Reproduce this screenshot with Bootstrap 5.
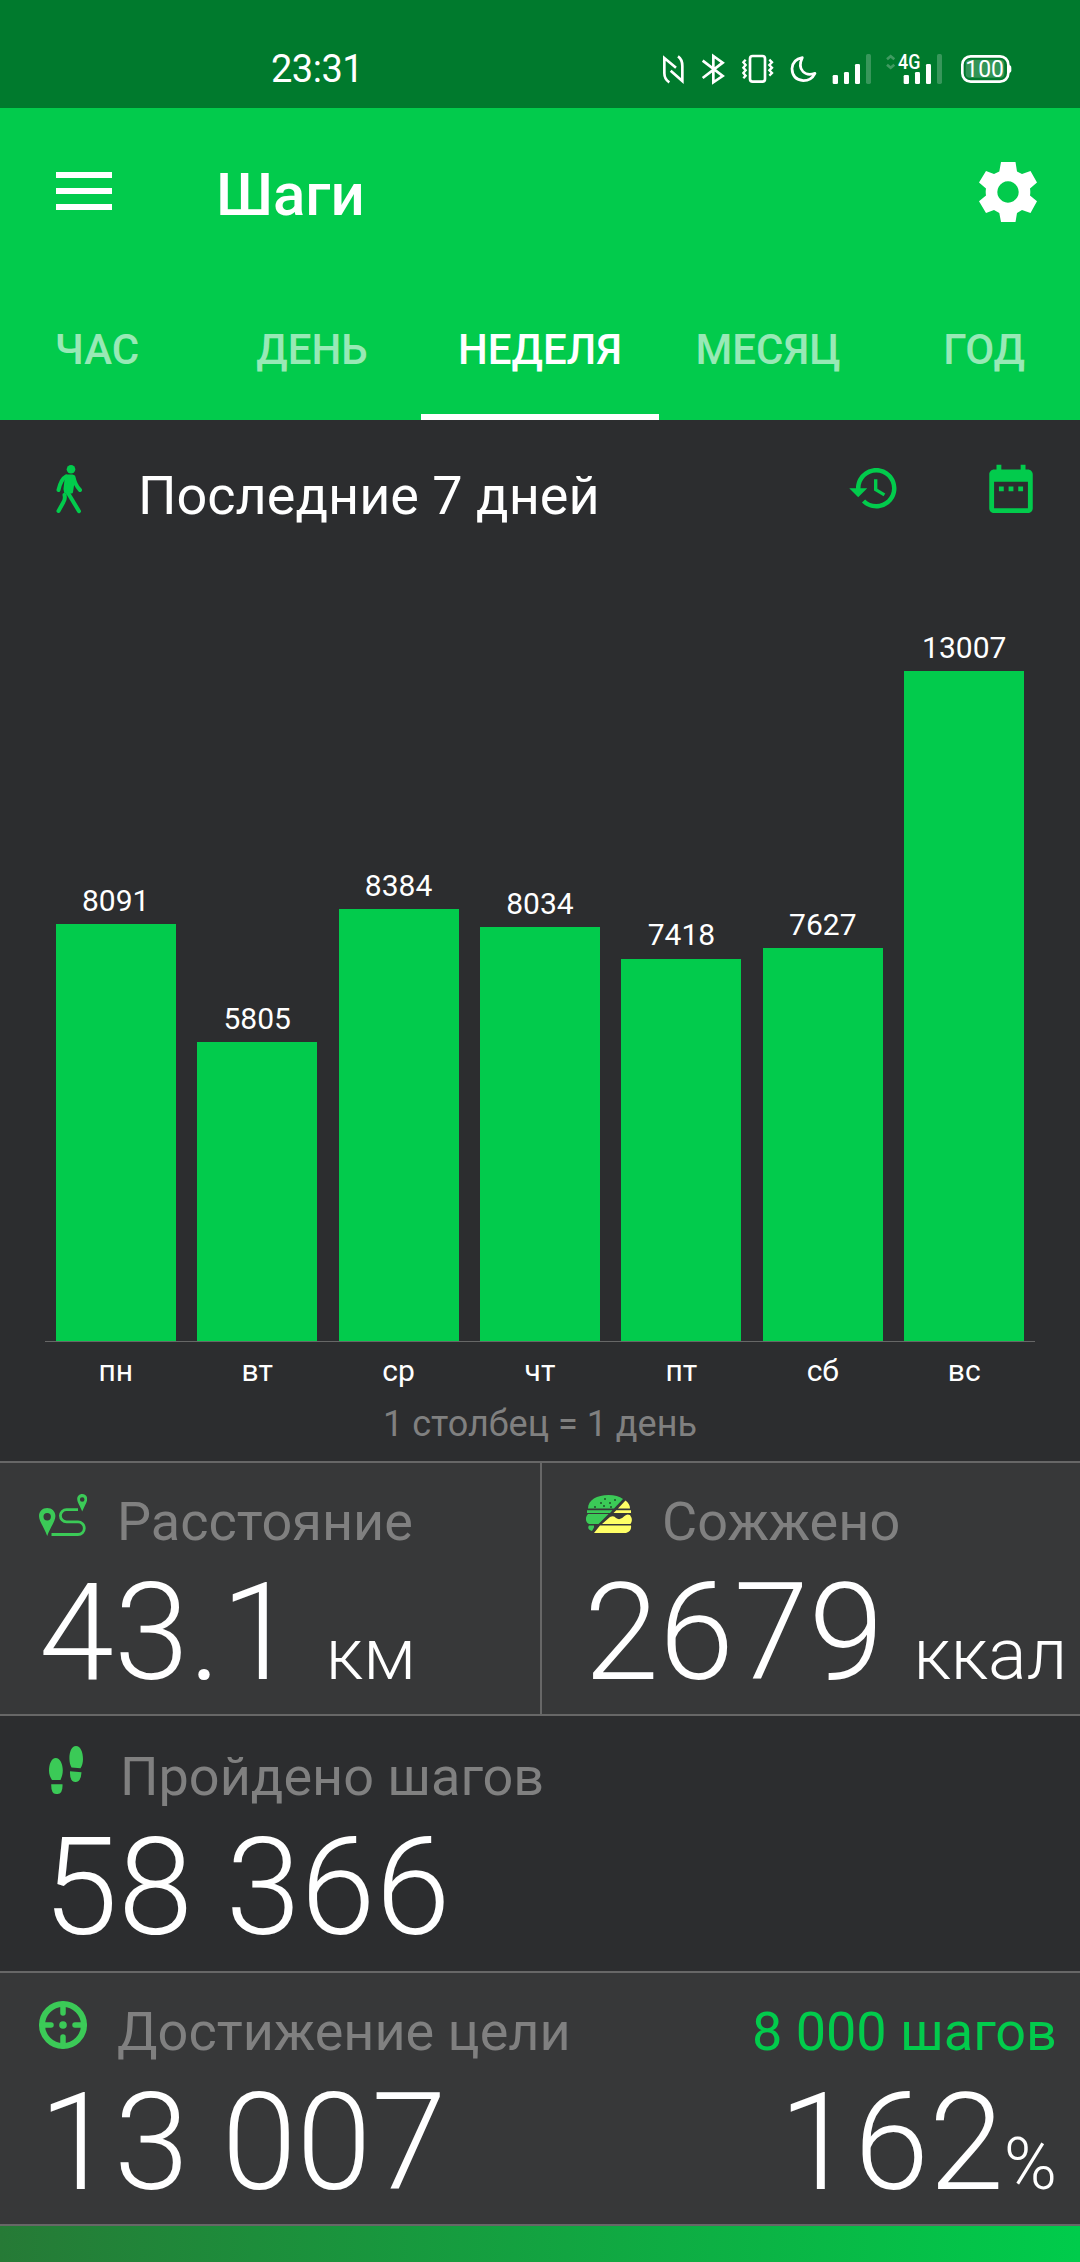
<!DOCTYPE html>
<html lang="ru" data-bs-theme="dark">
<head>
<meta charset="utf-8">
<meta name="viewport" content="width=device-width, initial-scale=1">
<title>Шаги</title>
<link href="https://cdn.jsdelivr.net/npm/bootstrap@5.3.0/dist/css/bootstrap.min.css" rel="stylesheet">
<style>
  :root { --accent: #02cb4c; --leaf: #3bca57; --panel: #2c2d2f; --panel-alt: #373839; --rule: #676767; --muted: #808080; }
  html { overflow-x: hidden; }
  body { width: 1080px; height: 2262px; overflow: hidden; background: var(--panel); color: #fff; font-family: Roboto, sans-serif; }
  svg { display: block; flex: none; }
  .status-strip { height: 108px; background: #007a2d; padding: 50px 66px 0 271px; }
  .clock { font-size: 38px; line-height: 38px; letter-spacing: -.5px; }
  .app-top { height: 312px; background: var(--accent); }
  .title-row { height: 202px; padding: 48px 36px 0 56px; }
  .menu-lines { margin-top: 16px; }
  .app-title { font-size: 60px; line-height: 72px; font-weight: 500; margin: 3px 0 0 104px; }
  .tab-strip { height: 110px; }
  .tab-strip .nav-link { font-size: 42px; line-height: 50px; font-weight: 500; padding: 15px 0 0; color: rgba(255,255,255,.6); text-align: center; border-radius: 0; }
  .tab-strip .nav-link.active { color: #fff; box-shadow: inset 0 -6px #fff; }
  .t-hour { width: 194px; } .t-day { width: 236px; margin-right: -9px; } .t-week { width: 238px; }
  .t-month { width: 218px; } .t-year { width: 214px; margin-right: -11px; }
  .chart-panel { height: 1041px; padding-top: 44px; }
  .range-row { height: 64px; padding: 0 40px 0 56px; }
  .range-title { font-size: 54px; line-height: 64px; font-weight: 400; margin-left: 55px; }
  .calendar-icon { margin-left: 81px; }
  .chart-box { margin: 0 45px; }
  .plot { height: 813px; }
  .slot { flex: 1 0 0; }
  .bar-value { font-size: 30px; line-height: 36px; margin-bottom: 5.5px; }
  .bar-fill { width: 120px; height: calc(var(--steps) * .05151px); background: var(--accent); }
  .axis { border-top: 1px solid var(--rule); padding-top: 9px; font-size: 30px; line-height: 40px; }
  .caption-line { font-size: 36px; line-height: 44px; margin-top: 11px; color: var(--muted); }
  .stat { border-top: 2px solid var(--rule); padding: 27px 23px 0 39px; height: 253px; white-space: nowrap; }
  .stat-alt { background: var(--panel-alt); }
  .stat-label { font-size: 54px; line-height: 64px; color: var(--muted); }
  .stat-big { font-size: 135px; line-height: 136px; font-weight: 300; margin-top: 11px; }
  .unit { font-size: 72px; line-height: 1; margin-left: -3px; }
  .unit.pct { margin-left: 0; }
  .dist { width: 540px; }
  .dist-label, .goal-label { margin-left: 30px; }
  .burn { width: 540px; border-left: 2px solid var(--rule); padding-left: 44px; padding-right: 0; }
  .burn-label { margin-left: 30px; }
  .kcal { margin-left: -2px; }
  .walked { height: 257px; padding-top: 29px; padding-left: 49px; }
  .walked svg { margin-top: -1px; }
  .walked-label { margin-left: 37px; }
  .steps { margin-left: -6px; }
  .goal-target { color: var(--accent); }
  .goal-bar { height: 38px; border-top: 2px solid var(--rule); background: linear-gradient(90deg, #267a36, #00cc4b) padding-box; }
</style>
</head>
<body>
<header>
  <div class="status-strip d-flex justify-content-between align-items-start">
    <span class="clock">23:31</span>
    <!-- status glyphs -->
    <svg width="354" height="36.8" viewBox="120 60 1062 110.4" fill="none" stroke="#fff" stroke-width="8">
      <path d="M148 157Q133 148 133 130V84L168 113M174 79Q187 88 187 108V153L152 122"/>
      <path d="M248 92L308 138L280 157V78L308 98L248 144"/>
      <rect x="390" y="78" width="45" height="77" rx="8"/>
      <path d="M377 89l-7 8 7 8-7 8 7 8-7 8 7 8-7 8M448 89l8 8-8 8 8 8-8 8 8 8-8 8" stroke-width="7"/>
      <path d="M547 83Q534 110 549 125Q562 138 585 130Q574 152 550 152Q517 149 516 116Q518 88 547 83Z" stroke-linejoin="round"/>
      <g fill="#fff" stroke="none">
        <rect x="638" y="135" width="16" height="27" rx="4"/><rect x="672" y="126" width="15" height="36" rx="4"/><rect x="705" y="102" width="15" height="60" rx="4"/><rect x="738" y="72" width="15" height="90" rx="5" opacity=".22"/>
        <rect x="851" y="135" width="16" height="27" rx="4"/><rect x="885" y="126" width="15" height="36" rx="4"/><rect x="918" y="102" width="15" height="60" rx="4"/><rect x="951" y="72" width="15" height="90" rx="5" opacity=".22"/>
        <rect x="1037" y="89" width="116" height="54" rx="12" opacity=".2"/>
        <path d="M1166 105q8 0 8 8v8q0 8-8 8z"/>
      </g>
      <path d="M801 88l11-9 11 9M801 104l11 9 11-9" opacity=".25"/>
      <rect x="1027" y="79" width="138" height="76" rx="25"/>
      <g fill="#fff" stroke="none" font-family="Roboto, sans-serif">
        <text x="834" y="116" font-size="61" font-weight="500" textLength="67" lengthAdjust="spacingAndGlyphs">4G</text>
        <text x="1036" y="141" font-size="70" textLength="116" lengthAdjust="spacingAndGlyphs">100</text>
      </g>
    </svg>
  </div>
  <div class="app-top">
    <div class="title-row d-flex align-items-start">
      <svg class="menu-lines" width="56" height="38" viewBox="0 0 56 38" fill="#fff"><path d="M0 0h56v6H0zM0 16h56v6H0zM0 32h56v6H0z"/></svg>
      <h1 class="app-title">Шаги</h1>
      <svg class="ms-auto" width="72" height="72" viewBox="-36 -36 72 72" fill="#fff"><path fill-rule="evenodd" d="M-7-30H7.5L9-20.5 14-18 22.5-21 29-9.5 22-3.5Q22.6 0 22 3.5L29 9.3 22.5 21 14 18 9 21 7.5 30H-7L-8.7 21-14 18-22 21-29 9.3-22 3.5Q-22.6 0-22-3.5L-29-9.5-22-21-14-18-8.7-20.5ZM0-10.7a10.7 10.7 0 1 0 .01 0Z"/></svg>
    </div>
    <nav class="nav flex-nowrap tab-strip">
      <a class="nav-link t-hour">ЧАС</a>
      <a class="nav-link t-day">ДЕНЬ</a>
      <a class="nav-link t-week active">НЕДЕЛЯ</a>
      <a class="nav-link t-month">МЕСЯЦ</a>
      <a class="nav-link t-year">ГОД</a>
    </nav>
  </div>
</header>
<main>
  <section class="chart-panel">
    <div class="range-row d-flex align-items-start">
      <!-- walker -->
      <svg width="27" height="50" viewBox="0 0 27 50" fill="#02cb4c" stroke="#02cb4c" stroke-linecap="round" stroke-linejoin="round">
        <circle cx="15" cy="5.3" r="4.3" stroke="none"/>
        <path d="M10.5 12h6l1 3-2 13h-6l-.5-3 1-9z" stroke-width="3"/>
        <path d="M10 12.5Q5 15 2.500 26M17.500 13Q19 21 24 26M8.500 31Q9.500 35 7.500 38L2.500 47M12 29L23 47.200" stroke-width="4" fill="none"/>
      </svg>
      <h2 class="range-title mb-0">Последние 7 дней</h2>
      <svg class="ms-auto" width="54" height="54" viewBox="0 1.2 24 24" fill="#02cb4c"><path d="M13 3c-4.97 0-9 4.03-9 9H1l3.89 3.89.07.14L9 12H6c0-3.87 3.13-7 7-7s7 3.13 7 7-3.13 7-7 7c-1.93 0-3.68-.79-4.94-2.06l-1.42 1.42C8.27 19.99 10.51 21 13 21c4.97 0 9-4.03 9-9s-4.03-9-9-9zm-1 5v5l4.28 2.54.72-1.21-3.5-2.08V8H12z"/></svg>
      <svg class="calendar-icon" width="58" height="58" viewBox="0 1.7 24 24" fill="#02cb4c"><path d="M9 11H7v2h2v-2zm4 0h-2v2h2v-2zm4 0h-2v2h2v-2zm2-7h-1V2h-2v2H8V2H6v2H5c-1.11 0-1.99.9-1.99 2L3 20c0 1.1.89 2 2 2h14c1.1 0 2-.9 2-2V6c0-1.1-.9-2-2-2zm0 16H5V9h14v11z"/></svg>
    </div>
    <div class="chart-box">
      <div class="plot d-flex align-items-end">
        <div class="slot d-flex flex-column align-items-center"><span class="bar-value">8091</span><div class="bar-fill" style="--steps:8091"></div></div>
        <div class="slot d-flex flex-column align-items-center"><span class="bar-value">5805</span><div class="bar-fill" style="--steps:5805"></div></div>
        <div class="slot d-flex flex-column align-items-center"><span class="bar-value">8384</span><div class="bar-fill" style="--steps:8384"></div></div>
        <div class="slot d-flex flex-column align-items-center"><span class="bar-value">8034</span><div class="bar-fill" style="--steps:8034"></div></div>
        <div class="slot d-flex flex-column align-items-center"><span class="bar-value">7418</span><div class="bar-fill" style="--steps:7418"></div></div>
        <div class="slot d-flex flex-column align-items-center"><span class="bar-value">7627</span><div class="bar-fill" style="--steps:7627"></div></div>
        <div class="slot d-flex flex-column align-items-center"><span class="bar-value">13007</span><div class="bar-fill" style="--steps:13007"></div></div>
      </div>
      <div class="axis d-flex text-center">
        <span class="slot">пн</span><span class="slot">вт</span><span class="slot">ср</span><span class="slot">чт</span><span class="slot">пт</span><span class="slot">сб</span><span class="slot">вс</span>
      </div>
    </div>
    <div class="caption-line text-center">1 столбец = 1 день</div>
  </section>

  <div class="d-flex">
    <section class="stat stat-alt dist">
      <div class="d-flex align-items-start">
        <svg width="48" height="50" viewBox="0 0 48 50" fill="#3bca57">
          <path fill-rule="evenodd" d="M8.200 18C3.500 18 0 21.500 0 26c0 5.500 5 11 8.200 20C11.400 37 16.400 31.500 16.400 26c0-4.500-3.500-8-8.200-8zm0 5a3.700 3.700 0 1 1 0 7.400 3.700 3.700 0 0 1 0-7.400zM43.200 4c-3 0-5 2.200-5 5 0 3.500 3 7 5 12.500 2-5.500 5-9 5-12.500 0-2.800-2-5-5-5zm0 3.200a2.300 2.300 0 1 1 0 4.600 2.300 2.300 0 0 1 0-4.600z"/>
          <path d="M39 19.700H27.500a6 6 0 0 0 0 12.200H39a6.300 6.300 0 0 1 0 12.600H12.500" fill="none" stroke="#3bca57" stroke-width="2.800"/>
        </svg>
        <span class="stat-label dist-label">Расстояние</span>
      </div>
      <div class="stat-big">43.1 <span class="unit">км</span></div>
    </section>
    <section class="stat stat-alt burn">
      <div class="d-flex align-items-start">
        <svg width="46" height="50" viewBox="0 0 46 50">
          <path fill="#3bca57" d="M2 18.500C2 10 11 5 22.500 5 28.500 5 33.500 6.500 37 9L28 18.500zM1 20.200H26.500L24 23H1zM2 24H22.500L12.500 34H3C-1 32-1 27 2 24zM3 35.500H8V37.500L6 41C2 40 1.500 37.500 3 35.500z"/>
          <path fill="#ffff66" d="M39.500 10.500C42.500 12.500 44 15.500 44 18.500H32zM30.300 20.200H45V23H27.500zM24 27Q28 25 30 28Q34 31 38.500 26Q41 23.500 44 25Q47.500 30 44.500 34H16zM14 35.500H45Q46 41 40 43H8z"/>
          <path d="M8 17h2M14 13h2M18 9h2M17 16h2M23 13h2M28 10h2M24 17h2" stroke="#20512c" stroke-width="1.500"/>
        </svg>
        <span class="stat-label burn-label">Сожжено</span>
      </div>
      <div class="stat-big kcal">2679 <span class="unit">ккал</span></div>
    </section>
  </div>

  <section class="stat walked">
    <div class="d-flex align-items-start">
      <svg width="34" height="52" viewBox="0 0 34 52" fill="#3bca57">
        <path d="M6.800 14C11 14 13.800 20 13.800 26.500 13.800 30 12.800 33 11.500 36H3C1 33 0 30 0 27 0 20 2.500 14 6.800 14zM2.200 40.300H13.500Q14 50 8.500 50H7Q2 50 2.200 40.300zM27 2C31.500 2 34 8 34 15 34 18.500 33.200 21.500 31.500 24.300L22.500 23.500C21.200 21 20.400 18 20.400 14.500 20.400 8 22.500 2 27 2zM21 27.300L32.500 28.200Q32 38 26.500 38 20.500 38 21 27.300z"/>
      </svg>
      <span class="stat-label walked-label">Пройдено шагов</span>
    </div>
    <div class="stat-big steps">58 366</div>
  </section>

  <section class="stat stat-alt">
    <div class="d-flex align-items-start">
      <svg width="48" height="50" viewBox="0 0 48 50" fill="none" stroke="#3bca57" stroke-width="6">
        <circle cx="24" cy="25" r="21"/><circle cx="24" cy="25" r="3.800" fill="#3bca57" stroke="none"/>
        <path d="M24 4v9M24 37v9M3 25h9M36 25h9" stroke-linecap="round" stroke-width="5.500"/>
      </svg>
      <span class="stat-label goal-label">Достижение цели</span>
      <span class="stat-label ms-auto goal-target">8 000 шагов</span>
    </div>
    <div class="stat-big d-flex justify-content-between align-items-baseline"><span>13 007</span><span>162<span class="unit pct">%</span></span></div>
  </section>
  <div class="goal-bar"></div>
</main>
<script src="https://cdn.jsdelivr.net/npm/bootstrap@5.3.0/dist/js/bootstrap.bundle.min.js"></script>
</body>
</html>
